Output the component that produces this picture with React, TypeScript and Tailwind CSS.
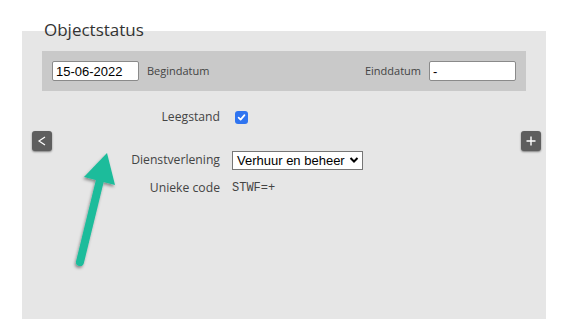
import React from 'react';

const labelFont = { fontFamily: '"Open Sans", "DejaVu Sans", sans-serif' };

function SideButton({ children, className }: { children: React.ReactNode; className: string }) {
  return (
    <button
      type="button"
      className={`absolute top-[100px] flex h-[20px] w-[20px] items-center justify-center rounded-[3px] bg-[#5e5e5e] text-white shadow-[0_1px_2px_rgba(0,0,0,0.45)] ${className}`}
    >
      {children}
    </button>
  );
}

export default function App() {
  return (
    <div className="relative h-[319px] w-[575px] overflow-hidden bg-white" style={labelFont}>
      <div className="pl-[22px] pt-[20px]">
        <div className="relative z-10 h-[20px] pl-[22px] text-[17px] leading-[20px] text-[#333]">Objectstatus</div>
        <div className="relative -mt-[9px] h-[300px] w-[524px] bg-[#e6e6e6] pt-[20px]">
          <div className="mx-[20px] flex h-[40px] items-center justify-between bg-[#c9c9c9] px-[10px]">
            <div className="flex items-center gap-[8px]">
              <input
                defaultValue="15-06-2022"
                className="h-[20px] w-[87px] rounded-[2px] border border-[#8a8a8a] bg-white px-[3px] text-[13px] text-black outline-none"
                style={{ fontFamily: '"Liberation Sans", Arial, sans-serif' }}
              />
              <span className="text-[11px] text-[#444]">Begindatum</span>
            </div>
            <div className="flex items-center gap-[8px]">
              <span className="text-[11px] text-[#444]">Einddatum</span>
              <input
                defaultValue="-"
                className="h-[20px] w-[87px] rounded-[2px] border border-[#8a8a8a] bg-white px-[3px] text-[13px] text-black outline-none"
                style={{ fontFamily: '"Liberation Sans", Arial, sans-serif' }}
              />
            </div>
          </div>

          <div className="mt-[16px] grid grid-cols-[198px_1fr] items-center gap-x-[12px] text-[12.2px] text-[#444]">
            <div className="h-[20px] text-right leading-[20px]">Leegstand</div>
            <div className="flex h-[20px] items-center">
              <span className="ml-[3px] flex h-[13px] w-[13px] items-center justify-center rounded-[3px] bg-[#2f74f0]">
                <svg width="9" height="9" viewBox="0 0 10 10">
                  <path d="M1.8 5.2 L4 7.4 L8.3 2.4" fill="none" stroke="white" strokeWidth="1.9" strokeLinecap="round" strokeLinejoin="round" />
                </svg>
              </span>
            </div>

            <div className="mt-[23px] h-[20px] text-right leading-[20px]">Dienstverlening</div>
            <div className="mt-[23px] flex h-[20px] items-center">
              <div
                className="flex h-[19px] w-[131px] items-center justify-between gap-[3px] whitespace-nowrap border border-[#767676] bg-white pl-[4px] pr-[3px] text-[13px] leading-[17px] text-black"
                style={{ fontFamily: '"Liberation Sans", Arial, sans-serif' }}
              >
                <span>Verhuur en beheer</span>
                <svg width="10" height="8" viewBox="0 0 10 8" className="shrink-0">
                  <path d="M1.5 2 L5 5.5 L8.5 2" fill="none" stroke="black" strokeWidth="2" />
                </svg>
              </div>
            </div>

            <div className="mt-[8px] h-[20px] text-right leading-[20px]">Unieke code</div>
            <div
              className="mt-[8px] h-[20px] text-[12px] leading-[20px] text-[#444]"
              style={{ fontFamily: '"Liberation Mono", "Courier New", monospace' }}
            >
              STWF=+
            </div>
          </div>

          <SideButton className="left-[10px]">
            <svg width="10" height="12" viewBox="0 0 10 12">
              <path d="M8 2 L2 6 L8 10" fill="none" stroke="white" strokeWidth="1.2" />
            </svg>
          </SideButton>
          <SideButton className="right-[5px]">
            <svg width="10" height="10" viewBox="0 0 10 10">
              <path d="M5 0.5 V9.5 M0.5 5 H9.5" fill="none" stroke="white" strokeWidth="1.4" />
            </svg>
          </SideButton>
        </div>
      </div>

      <svg className="pointer-events-none absolute left-0 top-0" width="575" height="319" viewBox="0 0 575 319">
        <defs>
          <filter id="sh" x="-50%" y="-50%" width="200%" height="200%">
            <feDropShadow dx="-1" dy="2" stdDeviation="1.5" floodColor="#000" floodOpacity="0.4" />
          </filter>
        </defs>
        <g filter="url(#sh)">
          <line x1="80" y1="262" x2="102" y2="172" stroke="#1bbc9b" strokeWidth="8" strokeLinecap="round" />
          <polygon points="107,153 84,177 115,185" fill="#1bbc9b" />
        </g>
      </svg>
    </div>
  );
}
